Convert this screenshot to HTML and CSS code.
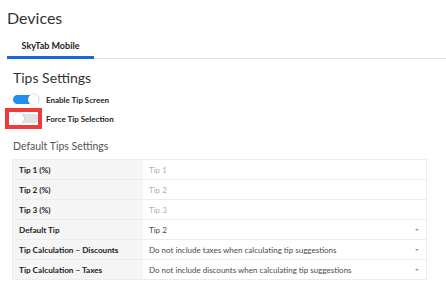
FILE: index.html
```html
<!DOCTYPE html>
<html>
<head>
<meta charset="utf-8">
<link rel="stylesheet" href="styles.css">
</head>
<body>
<div class="page">
  <h1 class="title">Devices</h1>
  <div class="tabs">
    <div class="tab active">SkyTab Mobile</div>
  </div>
  <div class="section">
    <h2 class="section-title">Tips Settings</h2>
    <div class="toggle-row">
      <span class="toggle on"><span class="knob"></span></span>
      <span class="toggle-label">Enable Tip Screen</span>
    </div>
    <div class="toggle-row">
      <span class="toggle off highlighted"><span class="knob"></span></span>
      <span class="toggle-label">Force Tip Selection</span>
    </div>
    <h3 class="sub-title">Default Tips Settings</h3>
    <div class="table">
      <div class="row"><div class="label">Tip 1 (%)</div><div class="value placeholder">Tip 1</div></div>
      <div class="row"><div class="label">Tip 2 (%)</div><div class="value placeholder">Tip 2</div></div>
      <div class="row"><div class="label">Tip 3 (%)</div><div class="value placeholder">Tip 3</div></div>
      <div class="row"><div class="label">Default Tip</div><div class="value select">Tip 2<span class="caret"></span></div></div>
      <div class="row"><div class="label">Tip Calculation – Discounts</div><div class="value select">Do not include taxes when calculating tip suggestions<span class="caret"></span></div></div>
      <div class="row"><div class="label">Tip Calculation – Taxes</div><div class="value select">Do not include discounts when calculating tip suggestions<span class="caret"></span></div></div>
    </div>
  </div>
</div>
</body>
</html>
```
FILE: styles.css
```css
* { box-sizing: border-box; }
body {
  margin: 0;
  background: #fff;
  font-family: Lato, "Open Sans", sans-serif;
  color: #333;
}
.page {
  padding: 8px 0 0 7px;
}
.title {
  margin: 0;
  font-size: 16px;
  font-weight: 400;
  line-height: 20px;
  color: #333;
}
.tabs {
  margin-top: 7px;
  display: flex;
  border-bottom: 1px solid #e4e4e4;
}
.tab {
  width: 87px;
  text-align: center;
  font-size: 9px;
  font-weight: 700;
  color: #222;
  padding: 5px 0 5px;
  border-bottom: 3px solid #1a66e0;
  margin-bottom: -1px;
}
.section {
  padding-left: 6px;
  padding-right: 19px;
}
.section-title {
  margin: 10px 0 0;
  font-size: 14px;
  font-weight: 400;
  line-height: 18px;
  color: #333;
}
.toggle-row {
  display: flex;
  align-items: center;
  gap: 7px;
  height: 19px;
}
.toggle-row:first-of-type { margin-top: 3px; }
.toggle {
  position: relative;
  display: block;
  flex: none;
  width: 26px;
  height: 9px;
  border-radius: 5px;
}
.toggle.on { background: #1e8fef; }
.toggle.off { background: #e2e2e2; }
.knob {
  position: absolute;
  top: -1px;
  width: 11px;
  height: 11px;
  border-radius: 50%;
  background: #fff;
  box-shadow: 0 0 1px 0.5px rgba(0,0,0,0.18);
}
.on .knob { right: 0; }
.off .knob { left: 0; }
.highlighted::after {
  content: "";
  position: absolute;
  left: -8px;
  right: -3px;
  top: -6px;
  bottom: -6px;
  border: 4px solid #ee3b3b;
}
.toggle-label {
  font-size: 8px;
  font-weight: 700;
  color: #222;
}
.sub-title {
  margin: 11px 0 0;
  font-size: 10.5px;
  font-weight: 400;
  color: #555;
  line-height: 14px;
}
.table {
  margin-top: 6px;
  margin-left: -1px;
  border: 1px solid #ececec;
}
.row {
  display: flex;
  height: 20px;
  border-top: 1px solid #ececec;
}
.row:first-child { border-top: none; height: 19px; }
.label {
  width: 130px;
  background: #f5f5f5;
  font-size: 8.2px;
  font-weight: 700;
  color: #222;
  padding-left: 6px;
  display: flex;
  align-items: center;
}
.value {
  flex: 1;
  font-size: 8px;
  color: #4a4a4a;
  padding-left: 6px;
  display: flex;
  align-items: center;
  position: relative;
}
.value.placeholder { color: #b0b0b0; }
.caret {
  position: absolute;
  right: 7px;
  top: 9px;
  width: 0;
  height: 0;
  border-left: 2.5px solid transparent;
  border-right: 2.5px solid transparent;
  border-top: 2.5px solid #999;
}
```
